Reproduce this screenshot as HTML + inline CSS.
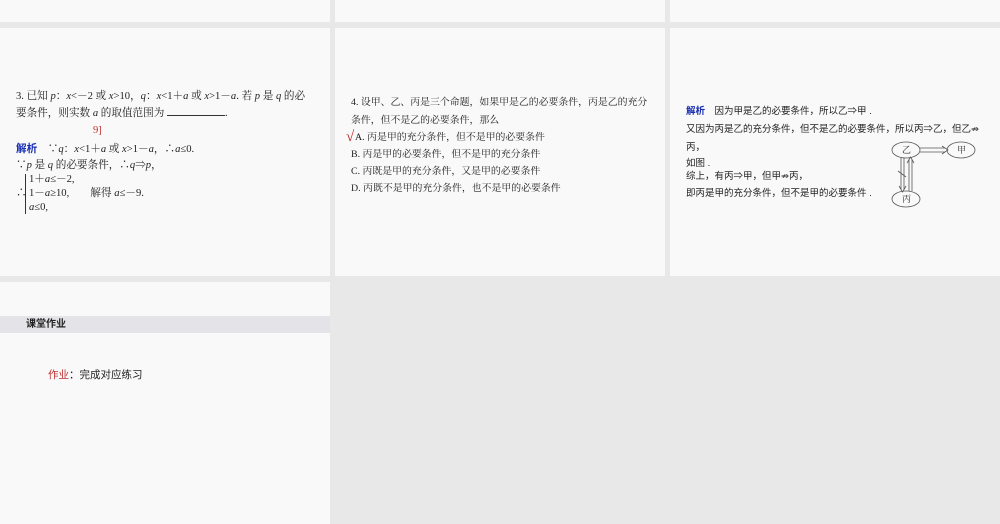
<!DOCTYPE html><html><head><meta charset="utf-8"><style>
body{margin:0;width:1000px;height:524px;background:#e8e8e8;position:relative;overflow:hidden;font-family:"Liberation Serif","Noto Serif CJK SC",serif;color:#222}
.p{position:absolute;background:#f9f9f9}
.t{position:absolute;font-size:9.5px;white-space:nowrap;line-height:12px}
.a{font-size:10.6px}
.c{font-size:9.9px}
.s{font-family:"Liberation Sans","Noto Sans CJK SC",sans-serif}
.b{color:#1a2fb0;font-weight:bold}
i{font-style:italic}
</style></head><body>
<div class="p" style="left:0;top:0;width:330px;height:22px"></div>
<div class="p" style="left:335px;top:0;width:330px;height:22px"></div>
<div class="p" style="left:670px;top:0;width:330px;height:22px"></div>
<div class="p" style="left:0;top:28px;width:330px;height:248px"></div>
<div class="p" style="left:335px;top:28px;width:330px;height:248px"></div>
<div class="p" style="left:670px;top:28px;width:330px;height:248px"></div>
<div class="p" style="left:0;top:282px;width:330px;height:242px"></div>

<div class="t a" style="left:16px;top:91px">3. 已知 <i>p</i>：<i>x</i>&lt;－2 或 <i>x</i>&gt;10，<i>q</i>：<i>x</i>&lt;1＋<i>a</i> 或 <i>x</i>&gt;1－<i>a</i>. 若 <i>p</i> 是 <i>q</i> 的必</div>
<div class="t a" style="left:16px;top:108px">要条件，则实数 <i>a</i> 的取值范围为 <span style="display:inline-block;width:58px;border-bottom:1px solid #333"></span>.</div>
<div class="t a" style="left:93px;top:125px;color:#c03030">9]</div>
<div class="t a" style="left:16px;top:143px"><span class="b s">解析</span>　∵<i>q</i>：<i>x</i>&lt;1＋<i>a</i> 或 <i>x</i>&gt;1－<i>a</i>，∴<i>a</i>≤0.</div>
<div class="t a" style="left:16px;top:160px">∵<i>p</i> 是 <i>q</i> 的必要条件，∴<i>q</i>⇒<i>p</i>，</div>
<div class="t a" style="left:16px;top:188px">∴</div>
<div style="position:absolute;left:25px;top:174px;width:3px;height:40px;border-left:1px solid #333"></div>
<div class="t a" style="left:29px;top:174px">1＋<i>a</i>≤－2,</div>
<div class="t a" style="left:29px;top:188px">1－<i>a</i>≥10,　　解得 <i>a</i>≤－9.</div>
<div class="t a" style="left:29px;top:202px"><i>a</i>≤0,</div>

<div class="t c" style="left:351px;top:97px">4. 设甲、乙、丙是三个命题，如果甲是乙的必要条件，丙是乙的充分</div>
<div class="t c" style="left:351px;top:115px">条件，但不是乙的必要条件，那么</div>
<div class="t" style="left:346px;top:131px;color:#c02020;font-size:15px;font-weight:bold">√</div>
<div class="t c" style="left:355px;top:132px">A. 丙是甲的充分条件，但不是甲的必要条件</div>
<div class="t c" style="left:351px;top:149px">B. 丙是甲的必要条件，但不是甲的充分条件</div>
<div class="t c" style="left:351px;top:166px">C. 丙既是甲的充分条件，又是甲的必要条件</div>
<div class="t c" style="left:351px;top:183px">D. 丙既不是甲的充分条件，也不是甲的必要条件</div>

<div class="t s" style="left:686px;top:106px"><span class="b">解析</span>　因为甲是乙的必要条件，所以乙⇒甲 .</div>
<div class="t s" style="left:686px;top:124px">又因为丙是乙的充分条件，但不是乙的必要条件，所以丙⇒乙，但乙⇏</div>
<div class="t s" style="left:686px;top:142px">丙，</div>
<div class="t s" style="left:686px;top:158px">如图 .</div>
<div class="t s" style="left:686px;top:171px">综上，有丙⇒甲，但甲⇏丙，</div>
<div class="t s" style="left:686px;top:188px">即丙是甲的充分条件，但不是甲的必要条件 .</div>
<svg style="position:absolute;left:880px;top:135px" width="110" height="80" font-family="Noto Serif CJK SC,serif" font-size="9">
<g fill="none" stroke="#555" stroke-width="0.8">
<ellipse cx="26" cy="15" rx="14" ry="8"/><ellipse cx="81" cy="15" rx="14" ry="8"/><ellipse cx="26" cy="64" rx="14" ry="8"/>
<path d="M40 13H65M40 17H65M62 11L68 15L62 19"/>
<path d="M21 23V55M24 23V55M19 51L22.5 57L26 51"/>
<path d="M29 56V24M32 56V24M27 28L30.5 22L34 28"/>
<path d="M18 36L26 42"/></g>
<text x="22" y="18" fill="#333">乙</text><text x="77" y="18" fill="#333">甲</text><text x="22" y="67" fill="#333">丙</text></svg>

<div style="position:absolute;left:0;top:316px;width:330px;height:17px;background:#e4e4e8"></div>
<div class="t s" style="left:26px;top:319px;font-weight:bold;font-size:10px">课堂作业</div>
<div class="t s" style="left:48px;top:369px;font-size:10.5px"><span style="color:#c03030">作业</span>：完成对应练习</div>
</body></html>
